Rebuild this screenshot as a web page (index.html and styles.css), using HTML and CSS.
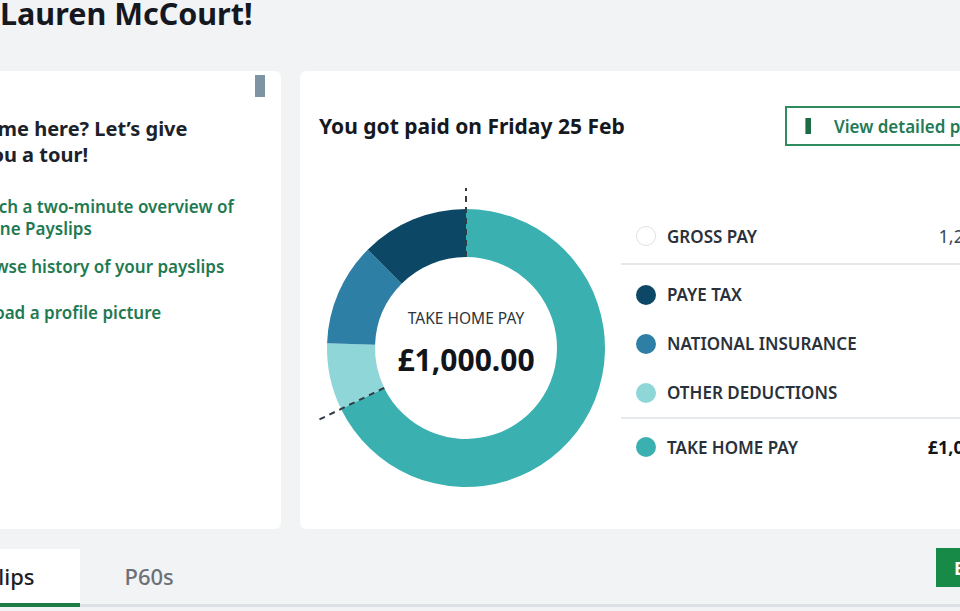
FILE: index.html
```html
<!DOCTYPE html>
<html lang="en">
<head>
<meta charset="utf-8">
<title>Payslips – Dashboard</title>
<link rel="stylesheet" href="styles.css">
</head>
<body>
<main class="page">
  <h1 class="greeting">Lauren McCourt!</h1>

  <section class="cards">
    <article class="card tour">
      <div class="tour-top"><span class="dismiss" aria-hidden="true"></span></div>
      <h2 class="tour-title">Time here? Let’s give you a tour!</h2>
      <ul class="tour-links">
        <li class="tl-1"><a href="#">Watch a two-minute overview of Online Payslips</a></li>
        <li class="tl-2"><a href="#">Browse history of your payslips</a></li>
        <li class="tl-3"><a href="#">Upload a profile picture</a></li>
      </ul>
    </article>

    <article class="card pay">
      <header class="pay-head">
        <h2 class="pay-title">You got paid on Friday 25 Feb</h2>
        <a class="btn-outline" href="#"><span class="btn-icon" aria-hidden="true"></span>View detailed payslip</a>
      </header>

      <div class="pay-body">
        <div class="donut">
          <svg class="donut-svg" viewBox="0 0 278 278" width="278" height="278" aria-hidden="true">
            <path fill="#3bb0b0" d="M139,0 A139,139 0 1 1 14.07,199.94 L57.21,178.89 A91,91 0 1 0 139,48 Z"/>
            <path fill="#8ed6d8" d="M14.07,199.94 A139,139 0 0 1 0.08,134.15 L48.06,135.82 A91,91 0 0 0 57.21,178.89 Z"/>
            <path fill="#2e7fa5" d="M0.08,134.15 A139,139 0 0 1 40.71,40.71 L74.65,74.65 A91,91 0 0 0 48.06,135.82 Z"/>
            <path fill="#0c4866" d="M40.71,40.71 A139,139 0 0 1 139,0 L139,48 A91,91 0 0 0 74.65,74.65 Z"/>
            <line x1="139" y1="48" x2="139" y2="-21" stroke="#333b44" stroke-width="2" stroke-dasharray="6 5"/>
            <line x1="57.21" y1="178.89" x2="-9.3" y2="211.3" stroke="#333b44" stroke-width="2" stroke-dasharray="6 5"/>
          </svg>
          <div class="donut-center">
            <span class="dc-label">TAKE HOME PAY</span>
            <span class="dc-value">£1,000.00</span>
          </div>
        </div>

        <div class="legend">
          <div class="row row-gross">
            <span class="dot dot-gross"></span><span class="lbl">GROSS PAY</span><span class="val">1,250.00</span>
          </div>
          <div class="group">
            <div class="row"><span class="dot dot-paye"></span><span class="lbl">PAYE TAX</span></div>
            <div class="row"><span class="dot dot-ni"></span><span class="lbl">NATIONAL INSURANCE</span></div>
            <div class="row"><span class="dot dot-other"></span><span class="lbl">OTHER DEDUCTIONS</span></div>
          </div>
          <div class="row row-total">
            <span class="dot dot-take"></span><span class="lbl">TAKE HOME PAY</span><span class="val val-strong">£1,000.00</span>
          </div>
        </div>
      </div>
    </article>
  </section>

  <nav class="tabs">
    <div class="tab-list">
      <a class="tab active" href="#">Payslips</a>
      <a class="tab" href="#">P60s</a>
    </div>
    <a class="btn-solid" href="#">Export</a>
  </nav>
</main>
</body>
</html>
```
FILE: styles.css
```css
html, body {
  margin: 0;
  padding: 0;
  overflow: hidden;
  background: #f1f3f5;
}

body {
  font-family: "Noto Sans", "Open Sans", sans-serif;
  color: #1c222a;
  width: 960px;
  height: 611px;
}

.page {
  width: 1200px;
}

.greeting {
  margin: -5px 0 0 0;
  font-size: 30.5px;
  line-height: 36px;
  font-weight: 700;
  color: #15191f;
}

.cards {
  display: flex;
  gap: 19px;
  height: 458px;
  margin: 40px 0 0 -59px;
}

.card {
  background: #ffffff;
  border-radius: 6px;
  box-sizing: border-box;
}

/* tour card */
.tour {
  flex: 0 0 340px;
  padding: 4px 16px 0 25px;
}

.tour-top {
  display: flex;
  justify-content: flex-end;
}

.dismiss {
  width: 10px;
  height: 22px;
  background: #7d95a3;
}

.tour-title {
  margin: 19px 0 0 14px;
  width: 215px;
  font-size: 20px;
  line-height: 26px;
  font-weight: 700;
  color: #1c222a;
}

.tour-links {
  list-style: none;
  margin: 28px 0 0 0;
  padding: 0;
}

.tour-links a {
  color: #1f7a52;
  font-size: 17px;
  line-height: 22px;
  font-weight: 600;
  text-decoration: none;
}

.tl-2 { margin-top: 16px; }
.tl-3 { margin-top: 24px; }

/* pay card */
.pay {
  flex: 0 0 740px;
  padding: 35px 19px 0 19px;
}

.pay-head {
  display: flex;
  justify-content: space-between;
  align-items: center;
  height: 40px;
}

.pay-title {
  margin: 0;
  font-size: 21px;
  font-weight: 700;
  color: #15191f;
}

.btn-outline {
  display: flex;
  align-items: center;
  box-sizing: border-box;
  width: 236px;
  height: 40px;
  padding-left: 18px;
  border: 2px solid #2f8c5e;
  color: #237a55;
  font-size: 17px;
  font-weight: 600;
  text-decoration: none;
  white-space: nowrap;
  overflow: hidden;
}

.btn-icon {
  flex: 0 0 auto;
  width: 6px;
  height: 16px;
  margin-right: 23px;
  background: linear-gradient(90deg, #8aa35a 0 1px, #1d6b45 1px);
}

.pay-body {
  display: flex;
  align-items: flex-start;
  margin-top: 63px;
}

.donut {
  display: grid;
  margin-left: 8px;
  width: 278px;
  height: 278px;
}

.donut-svg {
  grid-area: 1 / 1;
  overflow: visible;
}

.donut-center {
  grid-area: 1 / 1;
  display: flex;
  flex-direction: column;
  align-items: center;
  justify-content: center;
  padding-bottom: 6px;
}

.dc-label {
  font-size: 15.5px;
  line-height: 20px;
  color: #2e343b;
}

.dc-value {
  margin-top: 10px;
  font-size: 30px;
  line-height: 44px;
  font-weight: 700;
  color: #111418;
}

.legend {
  width: 389px;
  margin-left: 16px;
}

.row {
  display: flex;
  align-items: center;
  height: 49px;
  padding-left: 15px;
}

.row-gross {
  height: 54px;
  border-bottom: 2px solid #e6e9ec;
}

.group {
  padding-top: 5px;
  border-bottom: 2px solid #e6e9ec;
}

.row-total {
  height: 56px;
}

.dot {
  flex: 0 0 auto;
  width: 20px;
  height: 20px;
  border-radius: 50%;
  margin-right: 11px;
  box-sizing: border-box;
}

.dot-gross { background: #fff; border: 1.5px solid #dde2e6; }
.dot-paye { background: #0c4866; }
.dot-ni { background: #2e7fa5; }
.dot-other { background: #8ed6d8; }
.dot-take { background: #3bb0b0; }

.lbl {
  flex: 1 1 auto;
  font-size: 17px;
  font-weight: 600;
  color: #2a313a;
}

.val {
  font-size: 18px;
  color: #3a4757;
}

.val-strong {
  font-weight: 700;
  color: #111418;
}

/* tabs */
.tabs {
  display: flex;
  justify-content: space-between;
  align-items: flex-start;
  margin: 20px 0 0 -95px;
  width: 1195px;
  border-bottom: 3px solid #dde1e5;
}

.tab-list {
  display: flex;
}

.tab {
  display: flex;
  align-items: center;
  height: 54px;
  padding: 0 45px;
  font-size: 22px;
  font-weight: 500;
  color: #6c7075;
  text-decoration: none;
  border-bottom: 4px solid transparent;
  margin-bottom: -3px;
}

.tab.active {
  background: #ffffff;
  color: #1c2026;
  border-bottom-color: #1b7d45;
}

.btn-solid {
  display: flex;
  align-items: center;
  margin-top: -1px;
  height: 39px;
  width: 164px;
  padding-left: 18px;
  box-sizing: border-box;
  background: #178a47;
  color: #ffffff;
  font-size: 18px;
  font-weight: 700;
  text-decoration: none;
}
```
